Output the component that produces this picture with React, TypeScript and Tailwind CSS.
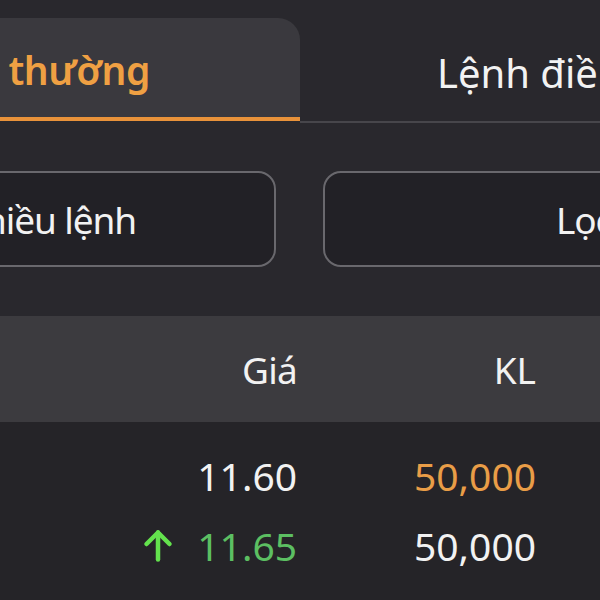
import React from 'react';

function ArrowUpIcon() {
  return (
    <svg width="30" height="33" viewBox="0 0 30 33" fill="none" stroke="#63e24d" strokeWidth="4.5" strokeLinecap="round" strokeLinejoin="round">
      <path d="M15 30.5V3.5" />
      <path d="M3.5 15L15 3.5L26.5 15" />
    </svg>
  );
}

type Row = { price: string; priceColor: string; vol: string; volColor: string; up?: boolean };

const rows: Row[] = [
  { price: '11.60', priceColor: 'text-[#f2f2f2]', vol: '50,000', volColor: 'text-[#e99d47]' },
  { price: '11.65', priceColor: 'text-[#5cbf62]', vol: '50,000', volColor: 'text-[#f2f2f2]', up: true },
];

export default function App() {
  return (
    <div className="w-[600px] h-[600px] overflow-hidden bg-[#29282d] font-['Noto_Sans',sans-serif] flex flex-col">
      {/* tabs */}
      <div className="pt-[18px]">
        <div className="flex items-start ml-[-242px] w-[1084px]">
          <div className="w-[542px] h-[103px] shrink-0 bg-[#3a393e] rounded-t-[22px] border-b-4 border-[#e8923a] flex items-center justify-end pr-[150px] pt-[4px] text-[39px] leading-none font-semibold tracking-[-0.01em] text-[#efa043] whitespace-nowrap">
            Lệnh thường
          </div>
          <div className="w-[542px] h-[105px] shrink-0 border-b-2 border-[#47464b] flex items-center pl-[137px] pt-[6px] text-[40px] leading-none text-[#f2f2f2] whitespace-nowrap">
            Lệnh điều kiện
          </div>
        </div>
      </div>

      {/* filters */}
      <div className="mt-[48px] flex gap-[47px] ml-[-196px] w-[1000px]">
        <div className="w-[472px] h-[96px] shrink-0 rounded-[18px] border-2 border-[#69686d] bg-[#222126] flex items-center justify-end pr-[138px] text-[37px] leading-none tracking-[-0.03em] text-[#f2f2f2] whitespace-nowrap">
          Nhiều lệnh
        </div>
        <div className="w-[472px] h-[96px] shrink-0 rounded-[18px] border-2 border-[#69686d] bg-[#222126] flex items-center pl-[231px] text-[37px] leading-none tracking-[-0.03em] text-[#f2f2f2] whitespace-nowrap">
          Lọc lệnh
        </div>
      </div>

      {/* table header */}
      <div className="mt-[49px] h-[106px] bg-[#3c3b3f] flex items-center text-[37px] leading-none text-[#f2f2f2]">
        <div className="w-[297px] text-right tracking-[-0.02em]">Giá</div>
        <div className="w-[239px] text-right">KL</div>
      </div>

      {/* table body */}
      <div className="flex-1 bg-[#252428] pt-[18px]">
        {rows.map((r, i) => (
          <div key={i} className="h-[70px] flex items-center text-[39px] leading-none">
            <div className={`w-[297px] flex items-center justify-end gap-[24px] ${r.priceColor}`}>
              {r.up && <ArrowUpIcon />}
              <span>{r.price}</span>
            </div>
            <div className={`w-[239px] text-right ${r.volColor}`}>{r.vol}</div>
          </div>
        ))}
      </div>
    </div>
  );
}
